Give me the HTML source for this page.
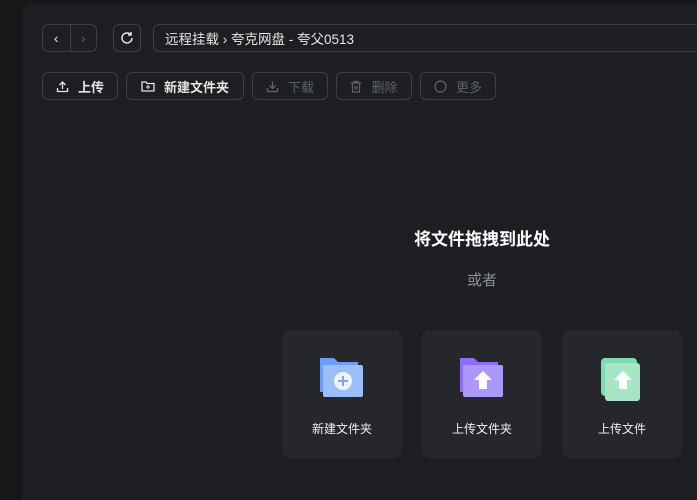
<!DOCTYPE html>
<html><head><meta charset="utf-8"><style>
html,body{margin:0;width:697px;height:500px;overflow:hidden}
body{background:#151719;font-family:"Liberation Sans","Noto Sans CJK SC",sans-serif;position:relative}
.panel{position:absolute;left:22px;top:4px;width:680px;height:496px;background:#1c1e22;border-radius:10px 0 0 0}
.b{position:absolute;border:1px solid #3c3f45;border-radius:6px;box-sizing:border-box;color:#e6e6e6;font-size:13px;display:flex;align-items:center;justify-content:center}
.b svg{margin-right:9px}
.dis{color:#5d626b}
.card{position:absolute;top:330px;width:120px;height:128px;background:#25272b;border-radius:8px;color:#f0f0f0;font-size:12px;text-align:center}
.card .t{position:absolute;top:90px;width:100%}
.card svg{position:absolute;left:37px;top:26px}
</style></head><body>
<div class="panel"></div>
<div class="b" style="left:42px;top:24px;width:55px;height:28px;justify-content:flex-start">
<span style="width:27px;text-align:center;font-size:14px">‹</span><span style="width:1px;height:26px;background:#3c3f45"></span><span style="width:26px;text-align:center;font-size:14px;color:#5d626b">›</span></div>
<div class="b" style="left:113px;top:24px;width:28px;height:28px"><svg width="16" height="16" viewBox="0 0 16 16" style="margin:0"><path d="M13 8a5 5 0 1 1-1.5-3.6M12 2v3h-3" fill="none" stroke="#e6e6e6" stroke-width="1.5"/></svg></div>
<div class="b" style="left:153px;top:24px;width:560px;height:28px;justify-content:flex-start;padding-left:11px;font-size:13.5px">远程挂载 › 夸克网盘 - 夸父0513</div>
<div class="b" style="left:42px;top:72px;width:76px;height:28px;font-weight:bold"><svg width="13" height="13" viewBox="0 0 13 13"><path d="M6.5 9V2M3.5 5l3-3 3 3M1.5 8v3.5h10V8" fill="none" stroke="#e6e6e6" stroke-width="1.3"/></svg>上传</div>
<div class="b" style="left:126px;top:72px;width:118px;height:28px;font-weight:bold"><svg width="14" height="12"><path d="M1 2h4l1 1.5h7V11H1z" fill="none" stroke="#e6e6e6" stroke-width="1.3"/><path d="M7 5v4M5 7h4" stroke="#e6e6e6"/></svg>新建文件夹</div>
<div class="b dis" style="left:252px;top:72px;width:76px;height:28px"><svg width="13" height="13" viewBox="0 0 13 13"><path d="M6.5 1.5v7M3.5 5.5l3 3 3-3M1.5 8v3.5h10V8" fill="none" stroke="#5d626b" stroke-width="1.3"/></svg>下载</div>
<div class="b dis" style="left:336px;top:72px;width:76px;height:28px"><svg width="12" height="13" viewBox="0 0 12 13"><path d="M1 3h10M4 3V1.5h4V3M2.5 3v9h7V3M5 6v3.5M7 6v3.5" fill="none" stroke="#5d626b" stroke-width="1.2"/></svg>删除</div>
<div class="b dis" style="left:420px;top:72px;width:76px;height:28px"><svg width="13" height="13"><circle cx="6.5" cy="6.5" r="5.5" fill="none" stroke="#5d626b" stroke-width="1.2"/></svg>更多</div>
<div style="position:absolute;left:382px;width:200px;top:225px;text-align:center;color:#fff;font-weight:bold;font-size:17px">将文件拖拽到此处</div>
<div style="position:absolute;left:382px;width:200px;top:269px;text-align:center;color:#8a8f98;font-size:15px">或者</div>
<div class="card" style="left:282px"><svg width="46" height="44"><path d="M1 2h14l4 4h20v30H1z" fill="#6aa0f7"/><rect x="4" y="9" width="40" height="32" rx="2" fill="#9bbff9"/><circle cx="24" cy="25" r="9" fill="#eef4ff"/><path d="M24 20v10M19 25h10" stroke="#7aa6f2" stroke-width="2"/></svg><div class="t">新建文件夹</div></div>
<div class="card" style="left:422px"><svg width="46" height="44"><path d="M1 2h14l4 4h20v30H1z" fill="#8c6ff5"/><rect x="4" y="9" width="40" height="32" rx="2" fill="#ab98fa"/><path d="M24 15l9 9h-5v9h-8v-9h-5z" fill="#fff"/></svg><div class="t">上传文件夹</div></div>
<div class="card" style="left:562px"><svg width="46" height="46"><rect x="2" y="2" width="36" height="38" rx="4" fill="#7fdcb4"/><rect x="6" y="7" width="35" height="38" rx="3" fill="#a6e6c7"/><path d="M24 15l9 9h-5v9h-8v-9h-5z" fill="#fff"/></svg><div class="t">上传文件</div></div>
</body></html>
